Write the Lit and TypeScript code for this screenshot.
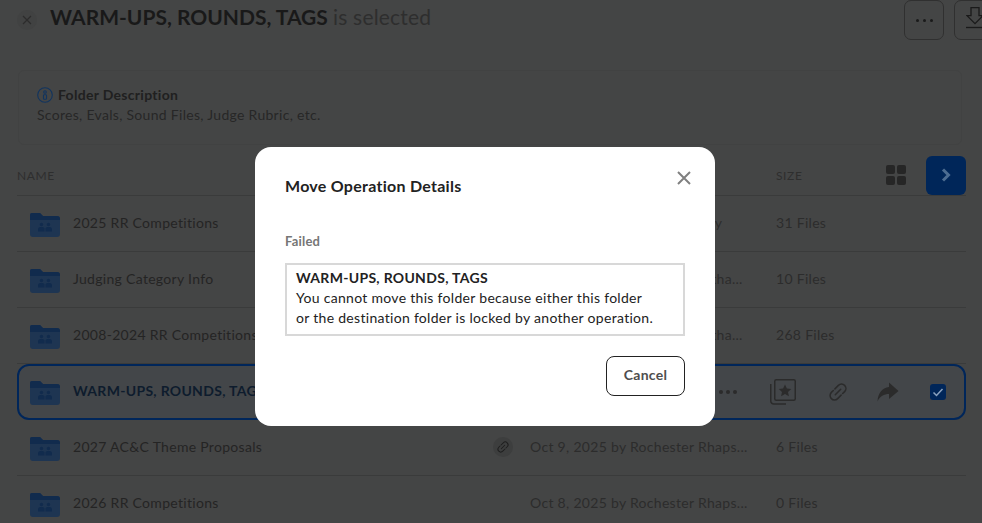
import { LitElement, css, html, svg } from "lit";
import { customElement } from "lit/decorators.js";

type Row = { name: string; date: string; size: string; selected?: boolean; shared?: boolean };

const rows: Row[] = [
  { name: "2025 RR Competitions", date: "Oct 14, 2025 by Holly Murray", size: "31 Files" },
  { name: "Judging Category Info", date: "Oct 13, 2025 by Samuel Kortha...", size: "10 Files" },
  { name: "2008-2024 RR Competitions", date: "Oct 13, 2025 by Samuel Kortha...", size: "268 Files" },
  { name: "WARM-UPS, ROUNDS, TAGS", date: "", size: "", selected: true },
  { name: "2027 AC&C Theme Proposals", date: "Oct 9, 2025 by Rochester Rhaps...", size: "6 Files", shared: true },
  { name: "2026 RR Competitions", date: "Oct 8, 2025 by Rochester Rhaps...", size: "0 Files" },
];

const folder = svg`<svg width="30" height="24" viewBox="0 0 30 24">
  <path d="M2 0h8l3 3h14a3 3 0 0 1 3 3v15a3 3 0 0 1-3 3H3a3 3 0 0 1-3-3V2a2 2 0 0 1 2-2z" fill="#1e3552"/>
  <path d="M2 0h8l3 3h14a3 3 0 0 1 3 3v1H0V2a2 2 0 0 1 2-2z" fill="#112b4d"/>
  <circle cx="11.500" cy="11.500" r="1.700" fill="#112b4d"/><circle cx="18.500" cy="11.500" r="1.700" fill="#112b4d"/>
  <path d="M8 18.500v-2a2.500 2.500 0 0 1 2.500-2.500h2a2 2 0 0 1 2 2.500v2zM15.500 18.500v-2a2 2 0 0 1 2-2.500h2a2.500 2.500 0 0 1 2.500 2.500v2z" fill="#112b4d"/>
</svg>`;

const link = (size: number) => svg`<svg width=${size} height=${size} viewBox="0 0 20 20" fill="none" stroke="currentColor" stroke-width="1.400" stroke-linecap="round">
  <g transform="rotate(-45 10 10)">
    <path d="M8 6H5.500a4 4 0 0 0 0 8H10"/>
    <path d="M12 14h2.500a4 4 0 0 0 0-8H10"/>
    <path d="M6.500 10h7"/>
  </g>
</svg>`;

// The page sits behind the dialog's backdrop, so its palette is the dimmed one as seen.
@customElement("app-root")
export class AppRoot extends LitElement {
  static styles = css`
    :host {
      display: block;
      position: relative;
      width: 982px;
      height: 523px;
      overflow: hidden;
      background: #444545;
      color: #222;
      font-family: Lato, "Liberation Sans", sans-serif;
    }
    .header {
      display: flex;
      align-items: center;
      height: 40px;
      padding-left: 17px;
    }
    .close-circle {
      display: flex;
      align-items: center;
      justify-content: center;
      width: 20px;
      height: 20px;
      border-radius: 50%;
      background: #414242;
      color: #2c2c2c;
      margin-right: 13px;
    }
    .title {
      flex: 1;
      padding-bottom: 8px;
      font-size: 21px;
      font-weight: 700;
      white-space: nowrap;
      color: #191919;
    }
    .title span {
      font-weight: 400;
      color: #2e2e2e;
      letter-spacing: 0.2px;
    }
    .tool {
      display: flex;
      align-items: center;
      justify-content: center;
      box-sizing: border-box;
      flex: none;
      width: 40px;
      height: 40px;
      border: 1px solid #303030;
      border-radius: 7px;
      margin-right: 10px;
      color: #1a1a1a;
    }
    .tool .dots {
      gap: 4px;
      margin: 0;
    }
    .tool .dots i {
      width: 3px;
      height: 3px;
    }
    .tool.cut {
      margin-right: -12px;
      justify-content: flex-start;
      align-items: flex-start;
      padding: 6px 0 0 11px;
    }
    .desc {
      box-sizing: border-box;
      margin: 30px 0 0 18px;
      width: 944px;
      height: 75px;
      padding: 14px 18px;
      border: 1px solid #414242;
      border-radius: 6px;
      font-size: 14px;
      line-height: 20px;
      letter-spacing: 0.3px;
      color: #272727;
    }
    .desc-title {
      display: flex;
      align-items: center;
      gap: 5px;
      font-weight: 700;
      color: #202020;
    }
    .head {
      display: grid;
      grid-template-columns: 513px 246px 1fr auto;
      align-items: center;
      height: 40px;
      margin: 10px 16px 0 17px;
      font-size: 12px;
      letter-spacing: 0.6px;
      color: #2e2e2e;
    }
    .head-tools {
      display: flex;
      align-items: center;
      gap: 20px;
    }
    .grid-icon {
      display: grid;
      grid-template-columns: 9px 9px;
      gap: 2px;
    }
    .grid-icon i {
      height: 9px;
      border-radius: 2px;
      background: #262626;
    }
    .next {
      display: flex;
      align-items: center;
      justify-content: center;
      width: 40px;
      height: 39px;
      border-radius: 6px;
      background: #002659;
      color: #4d6d92;
    }
    .rows {
      margin: 0 16px 0 17px;
      border-top: 1px solid #3a3b3b;
    }
    .row {
      display: grid;
      grid-template-columns: 56px 440px 17px 246px 1fr;
      align-items: center;
      box-sizing: border-box;
      height: 56px;
      padding-bottom: 2px;
      border-bottom: 1px solid #3a3b3b;
      font-size: 14px;
      letter-spacing: 0.3px;
      color: #242424;
      white-space: nowrap;
    }
    .row .cell-muted {
      color: #2c2c2c;
    }
    .row.selected {
      grid-template-columns: 54px 440px 17px 246px 1fr;
      border: 2px solid #00265a;
      border-radius: 12px;
      padding-bottom: 4px;
      background: #434649;
      font-weight: 700;
      color: #0e1c2d;
    }
    .ico {
      display: flex;
      padding: 4px 0 0 13px;
    }
    .row.selected .ico {
      padding: 6px 0 0 11px;
    }
    .badge {
      display: flex;
      align-items: center;
      justify-content: center;
      width: 20px;
      height: 20px;
      margin-left: -20px;
      border-radius: 50%;
      background: #3d3e3e;
      color: #1e1e1e;
    }
    .actions {
      grid-column: 4 / 6;
      display: flex;
      align-items: center;
      justify-content: flex-end;
      gap: 30px;
      padding: 4px 18px 0 0;
      color: #2b2b2b;
      font-weight: 400;
    }
    .actions .link {
      display: flex;
      margin-right: -2px;
    }
    .actions .stack {
      margin-right: 1px;
    }
    .check {
      margin-left: 1px;
    }
    .dots {
      display: flex;
      gap: 3px;
      margin-right: 3px;
    }
    .dots i {
      width: 4px;
      height: 4px;
      border-radius: 50%;
      background: currentColor;
    }
    .overlay {
      position: absolute;
      inset: 0;
      display: flex;
      align-items: flex-start;
      justify-content: center;
      padding-right: 12px;
    }
    .modal {
      box-sizing: border-box;
      width: 460px;
      height: 279px;
      margin-top: 147px;
      padding: 30px;
      border-radius: 16px;
      background: #fff;
      color: #222;
      display: flex;
      flex-direction: column;
    }
    .modal-head {
      display: flex;
      justify-content: space-between;
      height: 18px;
      font-size: 16px;
      font-weight: 700;
      line-height: 18px;
      letter-spacing: 0.27px;
    }
    .modal-close {
      margin: -7px -7px 0 0;
      color: #808080;
    }
    .label {
      margin-top: 38px;
      font-size: 13px;
      font-weight: 700;
      line-height: 16px;
      letter-spacing: 0.2px;
      color: #767676;
    }
    .msg {
      box-sizing: border-box;
      height: 73px;
      margin-top: 14px;
      padding: 3px 9px;
      border: 2px solid #d8d8d8;
      font-size: 14px;
      line-height: 20px;
      letter-spacing: 0.3px;
    }
    .msg b {
      display: block;
    }
    .modal-foot {
      display: flex;
      justify-content: flex-end;
      margin-top: 20px;
    }
    .cancel {
      box-sizing: border-box;
      width: 79px;
      height: 40px;
      padding: 0 0 3px;
      border: 1px solid #222;
      border-radius: 8px;
      background: #fff;
      color: #4e4e4e;
      font: 700 14px Lato, "Liberation Sans", sans-serif;
      letter-spacing: 0.3px;
    }
  `;

  private renderRow(r: Row) {
    if (r.selected) {
      return html`<div class="row selected">
        <div class="ico">${folder}</div>
        <div>${r.name}</div>
        <div></div>
        <div class="actions">
          <div class="dots"><i></i><i></i><i></i></div>
          <svg class="stack" width="26" height="26" viewBox="0 0 26 26" fill="none" stroke="currentColor" stroke-width="1.500">
            <rect x="4.750" y=".75" width="20.500" height="20.500" rx="1.500"/>
            <path d="M.75 5v17a3 3 0 0 0 3 3H16"/>
            <path d="M15 5.500l1.900 4 4.300.5-3.200 3 .9 4.300-3.900-2.200-3.900 2.200.9-4.300-3.200-3 4.300-.5z" fill="currentColor" stroke="none"/>
          </svg>
          <span class="link">${link(22)}</span>
          <svg width="22" height="20" viewBox="0 0 22 20"><path d="M12 .5l9.500 8.500L12 17v-5C7 12 3 14 .5 19.500 1 11 5 6 12 5z" fill="currentColor"/></svg>
          <svg class="check" width="16" height="16" viewBox="0 0 16 16"><rect width="16" height="16" rx="3" fill="#002659"/><path d="M3.500 8.500l3 3L12.500 5" fill="none" stroke="#8aa2bf" stroke-width="1.500"/></svg>
        </div>
      </div>`;
    }
    return html`<div class="row">
      <div class="ico">${folder}</div>
      <div>${r.name}</div>
      <div>${r.shared ? html`<div class="badge">${link(14)}</div>` : ""}</div>
      <div class="cell-muted">${r.date}</div>
      <div class="cell-muted">${r.size}</div>
    </div>`;
  }

  render() {
    return html`
      <div class="header">
        <div class="close-circle">
          <svg width="10" height="10" viewBox="0 0 10 10"><path d="M1 1l8 8M9 1l-8 8" stroke="currentColor" stroke-width="1.200"/></svg>
        </div>
        <div class="title">WARM-UPS, ROUNDS, TAGS <span>is selected</span></div>
        <div class="tool">
          <div class="dots"><i></i><i></i><i></i></div>
        </div>
        <div class="tool cut">
          <svg width="18" height="22" viewBox="0 0 18 22" fill="none" stroke="currentColor" stroke-width="1.300">
            <path d="M5 .7h8v8h4l-8 8-8-8h4z"/><path d="M0 20.500h18"/>
          </svg>
        </div>
      </div>
      <div class="desc">
        <div class="desc-title">
          <svg width="16" height="16" viewBox="0 0 16 16" fill="none" stroke="#11345f" stroke-width="1.100">
            <circle cx="8" cy="8" r="7.300"/><circle cx="8" cy="5" r="1.300"/><rect x="6.500" y="7.800" width="3" height="4.500" rx=".6"/>
          </svg>
          Folder Description
        </div>
        <div>Scores, Evals, Sound Files, Judge Rubric, etc.</div>
      </div>
      <div class="head">
        <div>NAME</div>
        <div>UPDATED</div>
        <div>SIZE</div>
        <div class="head-tools">
          <div class="grid-icon"><i></i><i></i><i></i><i></i></div>
          <div class="next">
            <svg width="10" height="14" viewBox="0 0 10 14"><path d="M2 1.500l5.500 5.500L2 12.500" fill="none" stroke="currentColor" stroke-width="3"/></svg>
          </div>
        </div>
      </div>
      <div class="rows">${rows.map((r) => this.renderRow(r))}</div>
      <div class="overlay">
        <div class="modal">
          <div class="modal-head">
            <span>Move Operation Details</span>
            <svg class="modal-close" width="16" height="16" viewBox="0 0 16 16"><path d="M2 2l12 12M14 2L2 14" stroke="currentColor" stroke-width="2"/></svg>
          </div>
          <div class="label">Failed</div>
          <div class="msg">
            <b>WARM-UPS, ROUNDS, TAGS</b>
            You cannot move this folder because either this folder<br />
            or the destination folder is locked by another operation.
          </div>
          <div class="modal-foot"><button class="cancel">Cancel</button></div>
        </div>
      </div>
    `;
  }
}
